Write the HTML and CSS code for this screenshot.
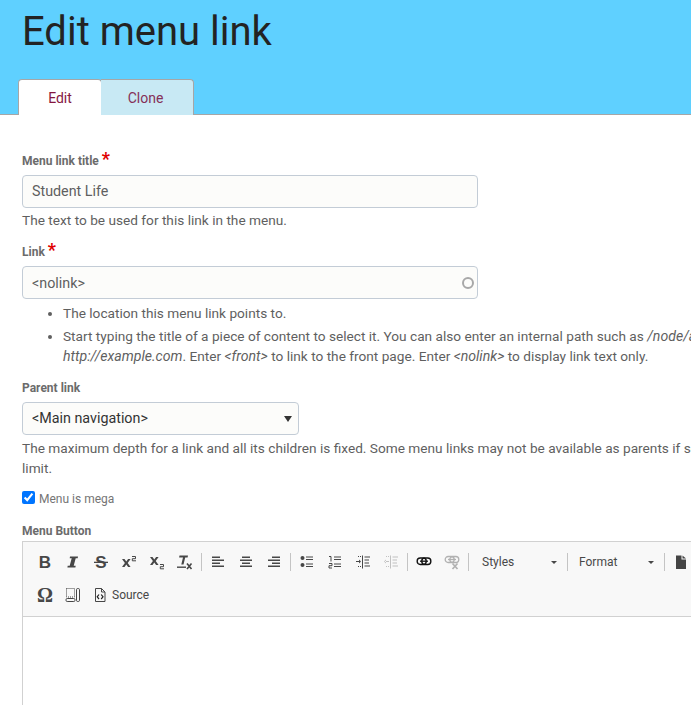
FILE: index.html
```html
<!DOCTYPE html>
<html lang="en">
<head>
<meta charset="utf-8">
<title>Edit menu link</title>
<link rel="stylesheet" href="styles.css">
</head>
<body>
<div class="page">
  <header class="head">
    <h1 class="title">Edit menu link</h1>
    <nav class="tabs">
      <a class="tab tab-active">Edit</a>
      <a class="tab tab-other">Clone</a>
    </nav>
  </header>
  <main class="form">
    <div class="field field-first">
      <label class="label">Menu link title <span class="req">*</span></label>
      <input class="input input-title" type="text" value="Student Life">
      <div class="help">The text to be used for this link in the menu.</div>
    </div>
    <div class="field field-link">
      <label class="label">Link <span class="req">*</span></label>
      <div class="auto">
        <input class="input" type="text" value="&lt;nolink&gt;">
        <span class="throbber"></span>
      </div>
      <ul class="help-list">
        <li>The location this menu link points to.</li>
        <li class="help-item">Start typing the title of a piece of content to select it. You can also enter an internal path such as <em class="path">/node/add</em> or an external URL such as <em class="path">http://example.com</em>. Enter <em class="path">&lt;front&gt;</em> to link to the front page. Enter <em class="path">&lt;nolink&gt;</em> to display link text only.</li>
      </ul>
    </div>
    <div class="field field-parent">
      <label class="label">Parent link</label>
      <div class="select-wrap">
        <select class="select"><option>&lt;Main navigation&gt;</option></select>
      </div>
      <div class="help help-parent">The maximum depth for a link and all its children is fixed. Some menu links may not be available as parents if selecting them would exceed this limit.</div>
    </div>
    <div class="check-row">
      <input class="check" type="checkbox" checked>
      <label class="check-label">Menu is mega</label>
    </div>
    <div class="field field-editor">
      <label class="label">Menu Button</label>
      <div class="editor">
        <div class="toolbar">
          <div class="tool-row">
            <span class="btn"><svg width="16" height="16" viewBox="0 0 16 16"><text class="g-b" x="8" y="14" text-anchor="middle">B</text></svg></span>
            <span class="btn"><svg width="16" height="16" viewBox="0 0 16 16"><path d="M5 2.500h8l-.3 1.800h-2L8.700 11.700h2l-.3 1.800h-8l.3-1.800h2l2-7.400h-2z" fill="#474747"/></svg></span>
            <span class="btn"><svg width="16" height="16" viewBox="0 0 16 16"><text class="g-s" x="8" y="14" text-anchor="middle">S</text><rect x="1" y="7.700" width="14" height="1.300" fill="#474747"/></svg></span>
            <span class="btn"><svg width="16" height="16" viewBox="0 0 16 16"><path d="M1 5h2.500l1.800 2.600L7.100 5h2.500L6.700 9l2.900 4H7.100L5.300 10.400 3.500 13H1l2.900-4z" fill="#474747"/><path d="M11 2.500h3.500v2.200h-3.200v2.100h3.700" fill="none" stroke="#474747"/></svg></span>
            <span class="btn"><svg width="16" height="16" viewBox="0 0 16 16"><path d="M1 3h2.500l1.800 2.600L7.100 3h2.500L6.700 7l2.900 4H7.100L5.300 8.400 3.500 11H1l2.900-4z" fill="#474747"/><path d="M11 10.500h3.500v2.200h-3.200v2.100h3.700" fill="none" stroke="#474747"/></svg></span>
            <span class="btn"><svg width="16" height="16" viewBox="0 0 16 16"><path d="M2.500 1.500h8.500l-.4 2H8.200L6.500 10.500H4.300L6 3.500H2.100z" fill="#474747"/><rect x="0" y="12.500" width="9" height="1.400" fill="#474747"/><path d="M10 9.500l4.500 5.500m0-5.500L10 15" stroke="#474747" stroke-width="1.600"/></svg></span>
            <span class="sep"></span>
            <span class="btn"><svg width="16" height="16" viewBox="0 0 16 16"><path d="M2 2.500h8V4H2zM2 5.500h12V7H2zM2 8.500h8V10H2zM2 11.500h12V13H2z" fill="#474747"/></svg></span>
            <span class="btn"><svg width="16" height="16" viewBox="0 0 16 16"><path d="M4 2.500h8V4H4zM2 5.500h12V7H2zM4 8.500h8V10H4zM2 11.500h12V13H2z" fill="#474747"/></svg></span>
            <span class="btn"><svg width="16" height="16" viewBox="0 0 16 16"><path d="M6 2.500h8V4H6zM2 5.500h12V7H2zM6 8.500h8V10H6zM2 11.500h12V13H2z" fill="#474747"/></svg></span>
            <span class="sep"></span>
            <span class="btn"><svg width="16" height="16" viewBox="0 0 16 16"><circle cx="3.500" cy="4" r="2" fill="#474747"/><circle cx="3.500" cy="11" r="2" fill="#474747"/><path d="M7 2.500h7v1H7zM7 5h7v1H7zM7 9.500h7v1H7zM7 12h7v1H7z" fill="#474747"/></svg></span>
            <span class="btn"><svg width="16" height="16" viewBox="0 0 16 16"><path d="M2 2.500h2v5M2 9.500h3v2.200H2v2.300h3" fill="none" stroke="#474747"/><path d="M7 2.500h7v1H7zM7 5h7v1H7zM7 9.500h7v1H7zM7 12h7v1H7z" fill="#474747"/></svg></span>
            <span class="btn"><svg width="16" height="16" viewBox="0 0 16 16"><path d="M1 7h4v1H1zM4 5.500l2 2-2 2zM7 1.500h1v13H7zM9.500 2.500H15v1H9.500zM9.500 5.500H14v1H9.500zM9.500 8.500H14v1H9.500zM9.500 11.500H15v1H9.500zM3 2h1v1H3zM5 2h1v1H5zM3 12h1v1H3zM5 12h1v1H5z" fill="#474747"/></svg></span>
            <span class="btn btn-off"><svg width="16" height="16" viewBox="0 0 16 16"><path d="M2 7h4v1H2zM3 5.500l-2 2 2 2zM7 1.500h1v13H7zM9.500 2.500H15v1H9.500zM9.500 5.500H14v1H9.500zM9.500 8.500H14v1H9.500zM9.500 11.500H15v1H9.500zM3 2h1v1H3zM5 2h1v1H5zM3 12h1v1H3zM5 12h1v1H5z" fill="#474747"/></svg></span>
            <span class="sep"></span>
            <span class="btn"><svg width="16" height="16" viewBox="0 0 16 16"><rect x="1.200" y="4" width="9" height="6.500" rx="3" fill="none" stroke="#111" stroke-width="1.400"/><rect x="5.800" y="4" width="9" height="6.500" rx="3" fill="none" stroke="#111" stroke-width="1.400"/><path d="M4 7.200h8" stroke="#111" stroke-width="1.300"/></svg></span>
            <span class="btn btn-off"><svg width="16" height="16" viewBox="0 0 16 16"><rect x="1.200" y="2.500" width="9" height="6" rx="3" fill="none" stroke="#111" stroke-width="1.300"/><rect x="5.800" y="2.500" width="9" height="6" rx="3" fill="none" stroke="#111" stroke-width="1.300"/><path d="M4 5.500h8" stroke="#111" stroke-width="1.300"/><path d="M8.500 9.500l5 5.500m0-5.500l-5 5.500" stroke="#111" stroke-width="1.700"/></svg></span>
            <span class="sep"></span>
            <span class="combo combo-styles"><span class="combo-text">Styles</span><span class="caret"></span></span>
            <span class="sep"></span>
            <span class="combo combo-format"><span class="combo-text">Format</span><span class="caret"></span></span>
            <span class="sep"></span>
            <span class="btn"><svg width="16" height="16" viewBox="0 0 16 16"><path d="M3 1.500h5.500V5.500H13V15H3z" fill="#444"/><path d="M9.500 1.500l3.500 3H9.500z" fill="#444"/></svg></span>
          </div>
          <div class="tool-row tool-row-2">
            <span class="btn"><svg width="16" height="16" viewBox="0 0 16 16"><text class="g-o" x="8" y="15" text-anchor="middle">Ω</text></svg></span>
            <span class="btn"><svg width="16" height="16" viewBox="0 0 16 16"><rect x="1.500" y="1.500" width="8" height="8.500" fill="none" stroke="#474747" stroke-dasharray="1 1"/><rect x="1" y="11.500" width="9" height="3" rx="1.200" fill="none" stroke="#474747"/><rect x="11.500" y="1.500" width="3" height="13" rx="1.200" fill="none" stroke="#474747"/></svg></span>
            <span class="btn-source">
              <svg width="14" height="16" viewBox="0 0 14 16"><path d="M2.500 1.500h6l3.500 3.500v9.500h-9.500zM8.500 1.500v3.500H12" fill="none" stroke="#474747"/><path d="M6 7.500L4.200 9.800 6 12M8.200 7.500L10 9.800 8.200 12" fill="none" stroke="#222" stroke-width="1.200"/></svg>
              <span class="source-text">Source</span>
            </span>
          </div>
        </div>
        <div class="editor-body"></div>
      </div>
    </div>
  </main>
</div>
</body>
</html>
```
FILE: styles.css
```css
html, body {
  margin: 0;
  padding: 0;
  height: 705px;
  overflow: hidden;
  background: #fff;
}
.page {
  width: 918px;
  font-family: Roboto, sans-serif;
  font-size: 13.67px;
  line-height: 20px;
  color: #5f5f5f;
}
.head {
  height: 114px;
  background: #5fd0ff;
  border-bottom: 1px solid #a6a6a6;
  display: flex;
  flex-direction: column;
  justify-content: space-between;
}
.title {
  margin: 8px 0 0 22px;
  font-size: 40px;
  line-height: 47px;
  font-weight: 400;
  color: #232323;
}
.tabs {
  display: flex;
  padding-left: 18px;
  margin-bottom: -1px;
}
.tab {
  height: 35px;
  line-height: 36px;
  font-size: 14px;
  text-align: center;
  border: 1px solid #a6a6a6;
  border-bottom: 0;
  box-sizing: content-box;
}
.tab-active {
  width: 82px;
  background: #fff;
  border-radius: 4px 4px 0 0;
  color: #85163f;
}
.tab-other {
  width: 89px;
  padding-right: 3px;
  margin-left: -1px;
  background: #c8e9f4;
  border-left: 0;
  border-radius: 0 4px 0 0;
  color: #853058;
}
.form {
  padding: 37px 0 0 22px;
}
.label {
  display: block;
  font-size: 12px;
  font-weight: 700;
  line-height: 16px;
  color: #6b6b6b;
}
.req {
  color: #e00000;
  font-size: 18px;
  line-height: 14px;
}
.input {
  display: block;
  box-sizing: border-box;
  width: 456px;
  height: 33px;
  margin: 6px 0 0;
  padding: 0 9px;
  font: 14.3px/20px Roboto, sans-serif;
  color: #5f5f5f;
  background: #fcfcfa;
  border: 1px solid #c3ccd6;
  border-radius: 4px;
  outline: none;
}
.input-title {
  padding-bottom: 1px;
}
.help {
  margin-top: 2px;
}
.help-parent {
  margin-top: 4px;
  line-height: 19.5px;
}
.field-link {
  margin-top: 13px;
}
.auto {
  position: relative;
  width: 456px;
}
.throbber {
  position: absolute;
  right: 4px;
  top: 11px;
  width: 8px;
  height: 8px;
  border: 2px solid #a8a8a8;
  border-radius: 50%;
}
.help-list {
  margin: 4px 0 0;
  padding: 0 0 0 41px;
}
.help-item {
  margin-top: 3px;
}
.path {
  font-size: 14.1px;
  font-style: italic;
}
.field-parent {
  margin-top: 14px;
}
.select-wrap {
  position: relative;
  width: 277px;
}
.select-wrap::after {
  content: "";
  position: absolute;
  right: 7px;
  top: 14px;
  border-left: 4.5px solid transparent;
  border-right: 4.5px solid transparent;
  border-top: 6px solid #333;
}
.select {
  display: block;
  box-sizing: border-box;
  width: 277px;
  height: 33px;
  margin-top: 6px;
  padding: 0 9px 1px;
  appearance: none;
  font: 14.3px/20px Roboto, sans-serif;
  color: #333;
  background: #fcfcfa;
  border: 1px solid #c3ccd6;
  border-radius: 4px;
  outline: none;
}
.check-row {
  display: flex;
  align-items: center;
  margin-top: 12px;
  height: 16px;
}
.check {
  margin: 0 4px 2px 0;
  width: 13px;
  height: 13px;
}
.check-label {
  padding-top: 2px;
  font-size: 12px;
  color: #757575;
}
.field-editor {
  margin-top: 17px;
}
.editor {
  margin-top: 2px;
  border-left: 1px solid #d1d1d1;
}
.toolbar {
  box-sizing: border-box;
  height: 76px;
  padding: 4px 0 0 8px;
  background: #f8f8f8;
  border-top: 1px solid #d1d1d1;
  border-bottom: 1px solid #d1d1d1;
}
.tool-row {
  display: flex;
  align-items: center;
  height: 32px;
}
.tool-row-2 {
  margin-top: 1px;
}
.btn {
  width: 28px;
  height: 28px;
  display: flex;
  align-items: center;
  justify-content: center;
  flex: none;
}
.btn-off {
  opacity: 0.3;
}
.sep {
  flex: none;
  width: 1px;
  height: 18px;
  margin: 0 2px;
  background: #c4c4c4;
}
.combo {
  flex: none;
  display: flex;
  align-items: center;
  justify-content: space-between;
  box-sizing: border-box;
  font-size: 12px;
  color: #484848;
}
.combo-styles {
  width: 94px;
  padding: 0 8px 0 11px;
}
.combo-format {
  width: 92px;
  padding: 0 8px 0 9px;
}
.caret {
  border-left: 3px solid transparent;
  border-right: 3px solid transparent;
  border-top: 3px solid #474747;
}
.btn-source {
  display: flex;
  align-items: center;
  gap: 5px;
  padding-left: 6px;
  font-size: 12px;
}
.source-text {
  color: #474747;
}
.g-b {
  font: 700 17px "Liberation Sans", sans-serif;
  fill: #474747;
}
.g-s {
  font: 700 17px "Liberation Sans", sans-serif;
  fill: #474747;
}
.g-o {
  font: 700 20px "Liberation Serif", serif;
  fill: #474747;
}
.editor-body {
  height: 120px;
  background: #fff;
}
```
